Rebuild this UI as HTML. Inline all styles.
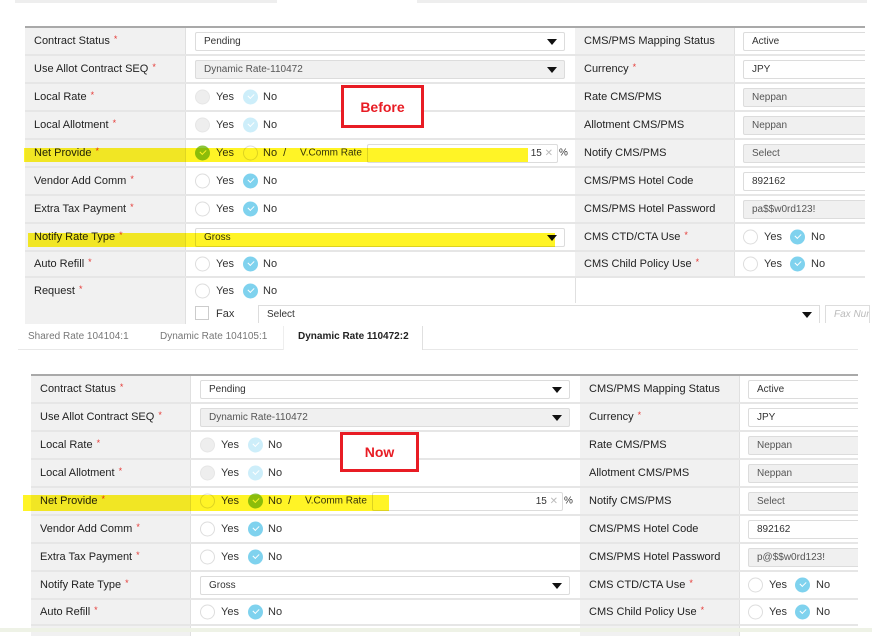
<!DOCTYPE html>
<html><head><meta charset="utf-8"><style>
*{box-sizing:border-box;margin:0;padding:0}
body{width:872px;height:632px;background:#fff;font-family:"Liberation Sans",Arial,sans-serif;position:relative;overflow:hidden;color:#222}
.sec{position:absolute;border-top:2px solid #a9a9a9}
.r{display:flex;border-bottom:2px solid #e6e6e6}
.l{background:#f1f1f1;font-size:11px;display:flex;align-items:center;padding-left:9px;border-right:1px solid #e0e0e0;white-space:nowrap}
.l i{color:#e53935;font-style:normal;font-size:9px;margin-left:4px;position:relative;top:-2px}
.v{position:relative;background:#fff;font-size:10px;overflow:hidden}
.A .c1{width:161px}.A .c2{width:389px}.A .c3{width:160px}.A .c4{width:130px}
.B .c1{width:160px}.B .c2{width:389px}.B .c3{width:160px}.B .c4{width:118px}
.box{position:absolute;left:9px;right:10px;top:4px;height:19px;border:1px solid #dcdcdc;border-radius:2px;padding-left:8px;line-height:17px;color:#333;background:#fff}
.box.g{background:#f0f0f0;color:#555}
.c4 .box{left:8px;right:-4px}
.arr{position:absolute;right:7px;top:6px;width:0;height:0;border-left:5px solid transparent;border-right:5px solid transparent;border-top:6px solid #111}
.rad{position:absolute;top:50%;transform:translateY(-50%);width:15px;height:15px;border-radius:50%;border:1px solid #ddd;background:#fff}
.rad.d{background:#eee;border-color:#e6e6e6}
.rad.c{background:#7fd2ee;border-color:#7fd2ee}
.rad.cd{background:#cdeefa;border-color:#cdeefa}
.rad.gr{background:#8cc63e;border-color:#8cc63e}
.rad.c::after,.rad.cd::after,.rad.gr::after{content:"";position:absolute;left:4px;top:3px;width:5px;height:3px;border-left:1.5px solid #fff;border-bottom:1.5px solid #fff;transform:rotate(-45deg)}
.t{position:absolute;top:50%;transform:translateY(-50%);font-size:11px;color:#333;white-space:nowrap}
.hl{position:absolute;background:#fff200;opacity:.85;mix-blend-mode:multiply}
.red{position:absolute;border:3px solid #e81c24;color:#e81c24;font-weight:bold;font-size:14px;display:flex;align-items:center;justify-content:center;background:#fff}
.tab{position:absolute;font-size:10px;color:#777;top:331px}
</style></head><body>

<div style="position:absolute;left:15px;top:0;width:262px;height:3px;background:#eee"></div>
<div style="position:absolute;left:417px;top:0;width:450px;height:3px;background:#eee"></div>

<!-- Section A -->
<div class="sec A" style="left:25px;top:26px;width:840px">
 <div class="r" style="height:28px"><div class="l c1">Contract Status<i>*</i></div><div class="v c2"><div class="box">Pending<span class="arr"></span></div></div><div class="l c3">CMS/PMS Mapping Status</div><div class="v c4"><div class="box">Active</div></div></div>
 <div class="r" style="height:28px"><div class="l c1">Use Allot Contract SEQ<i>*</i></div><div class="v c2"><div class="box g">Dynamic Rate-110472<span class="arr"></span></div></div><div class="l c3">Currency<i>*</i></div><div class="v c4"><div class="box">JPY</div></div></div>
 <div class="r" style="height:28px"><div class="l c1">Local Rate<i>*</i></div><div class="v c2"><span class="rad d" style="left:9px"></span><span class="t" style="left:30px">Yes</span><span class="rad cd" style="left:57px"></span><span class="t" style="left:77px">No</span></div><div class="l c3">Rate CMS/PMS</div><div class="v c4"><div class="box g">Neppan</div></div></div>
 <div class="r" style="height:28px"><div class="l c1">Local Allotment<i>*</i></div><div class="v c2"><span class="rad d" style="left:9px"></span><span class="t" style="left:30px">Yes</span><span class="rad cd" style="left:57px"></span><span class="t" style="left:77px">No</span></div><div class="l c3">Allotment CMS/PMS</div><div class="v c4"><div class="box g">Neppan</div></div></div>
 <div class="r" style="height:28px"><div class="l c1">Net Provide<i>*</i></div><div class="v c2"><span class="rad gr" style="left:9px"></span><span class="t" style="left:30px">Yes</span><span class="rad" style="left:57px"></span><span class="t" style="left:77px">No &nbsp;/</span><span class="t" style="left:114px;font-size:10px">V.Comm Rate</span><div class="box" style="left:181px;right:17px;text-align:right;padding-right:4px">15 <span style="color:#bbb">✕</span></div><span class="t" style="left:373px;font-size:10px">%</span></div><div class="l c3">Notify CMS/PMS</div><div class="v c4"><div class="box g">Select</div></div></div>
 <div class="r" style="height:28px"><div class="l c1">Vendor Add Comm<i>*</i></div><div class="v c2"><span class="rad" style="left:9px"></span><span class="t" style="left:30px">Yes</span><span class="rad c" style="left:57px"></span><span class="t" style="left:77px">No</span></div><div class="l c3">CMS/PMS Hotel Code</div><div class="v c4"><div class="box">892162</div></div></div>
 <div class="r" style="height:28px"><div class="l c1">Extra Tax Payment<i>*</i></div><div class="v c2"><span class="rad" style="left:9px"></span><span class="t" style="left:30px">Yes</span><span class="rad c" style="left:57px"></span><span class="t" style="left:77px">No</span></div><div class="l c3">CMS/PMS Hotel Password</div><div class="v c4"><div class="box g">pa$$w0rd123!</div></div></div>
 <div class="r" style="height:28px"><div class="l c1">Notify Rate Type<i>*</i></div><div class="v c2"><div class="box">Gross<span class="arr"></span></div></div><div class="l c3">CMS CTD/CTA Use<i>*</i></div><div class="v c4"><span class="rad" style="left:8px"></span><span class="t" style="left:29px">Yes</span><span class="rad c" style="left:55px"></span><span class="t" style="left:76px">No</span></div></div>
 <div class="r" style="height:26px"><div class="l c1">Auto Refill<i>*</i></div><div class="v c2"><span class="rad" style="left:9px"></span><span class="t" style="left:30px">Yes</span><span class="rad c" style="left:57px"></span><span class="t" style="left:77px">No</span></div><div class="l c3">CMS Child Policy Use<i>*</i></div><div class="v c4"><span class="rad" style="left:8px"></span><span class="t" style="left:29px">Yes</span><span class="rad c" style="left:55px"></span><span class="t" style="left:76px">No</span></div></div>
 <div class="r" style="height:25px;border-bottom:0"><div class="l c1">Request<i>*</i></div><div class="v c2"><span class="rad" style="left:9px"></span><span class="t" style="left:30px">Yes</span><span class="rad c" style="left:57px"></span><span class="t" style="left:77px">No</span></div><div class="v c3" style="border-left:1px solid #e0e0e0"></div><div class="v c4"></div></div>
 <div style="display:flex;height:21px"><div class="l c1"></div><div style="flex:1;position:relative;font-size:10px"></div></div>
</div>
<div style="position:absolute;left:195px;top:306px;width:14px;height:14px;border:1px solid #ccc;background:#fff"></div>
<span style="position:absolute;left:216px;top:308px;font-size:11px;color:#333">Fax</span>
<div style="position:absolute;left:258px;top:305px;width:562px;height:18px;border:1px solid #ddd;border-bottom:0;font-size:10px;padding-left:8px;line-height:18px;color:#333">Select<span class="arr" style="top:6px"></span></div>
<div style="position:absolute;left:825px;top:305px;width:45px;height:18px;border:1px solid #ddd;border-bottom:0;font-size:10px;padding-left:8px;line-height:18px;color:#bbb;font-style:italic;white-space:nowrap;overflow:hidden">Fax Num</div>

<div class="hl" style="left:24px;top:148px;width:504px;height:14px"></div>
<div class="hl" style="left:28px;top:233px;width:527px;height:14px"></div>
<div class="red" style="left:341px;top:85px;width:83px;height:43px">Before</div>

<!-- Tabs -->
<div style="position:absolute;left:18px;top:349px;width:840px;height:1px;background:#e8e8e8"></div>
<div style="position:absolute;left:283px;top:326px;width:140px;height:24px;background:#fff;border-right:1px solid #e0e0e0;border-left:1px solid #eee"></div>
<span class="tab" style="left:28px">Shared Rate 104104:1</span>
<span class="tab" style="left:160px">Dynamic Rate 104105:1</span>
<span class="tab" style="left:298px;color:#222;font-weight:bold">Dynamic Rate 110472:2</span>

<!-- Section B -->
<div class="sec B" style="left:31px;top:374px;width:827px">
 <div class="r" style="height:28px"><div class="l c1">Contract Status<i>*</i></div><div class="v c2"><div class="box">Pending<span class="arr"></span></div></div><div class="l c3">CMS/PMS Mapping Status</div><div class="v c4"><div class="box">Active</div></div></div>
 <div class="r" style="height:28px"><div class="l c1">Use Allot Contract SEQ<i>*</i></div><div class="v c2"><div class="box g">Dynamic Rate-110472<span class="arr"></span></div></div><div class="l c3">Currency<i>*</i></div><div class="v c4"><div class="box">JPY</div></div></div>
 <div class="r" style="height:28px"><div class="l c1">Local Rate<i>*</i></div><div class="v c2"><span class="rad d" style="left:9px"></span><span class="t" style="left:30px">Yes</span><span class="rad cd" style="left:57px"></span><span class="t" style="left:77px">No</span></div><div class="l c3">Rate CMS/PMS</div><div class="v c4"><div class="box g">Neppan</div></div></div>
 <div class="r" style="height:28px"><div class="l c1">Local Allotment<i>*</i></div><div class="v c2"><span class="rad d" style="left:9px"></span><span class="t" style="left:30px">Yes</span><span class="rad cd" style="left:57px"></span><span class="t" style="left:77px">No</span></div><div class="l c3">Allotment CMS/PMS</div><div class="v c4"><div class="box g">Neppan</div></div></div>
 <div class="r" style="height:28px"><div class="l c1">Net Provide<i>*</i></div><div class="v c2"><span class="rad" style="left:9px"></span><span class="t" style="left:30px">Yes</span><span class="rad gr" style="left:57px"></span><span class="t" style="left:77px">No &nbsp;/</span><span class="t" style="left:114px;font-size:10px">V.Comm Rate</span><div class="box" style="left:181px;right:17px;text-align:right;padding-right:4px">15 <span style="color:#bbb">✕</span></div><span class="t" style="left:373px;font-size:10px">%</span></div><div class="l c3">Notify CMS/PMS</div><div class="v c4"><div class="box g">Select</div></div></div>
 <div class="r" style="height:28px"><div class="l c1">Vendor Add Comm<i>*</i></div><div class="v c2"><span class="rad" style="left:9px"></span><span class="t" style="left:30px">Yes</span><span class="rad c" style="left:57px"></span><span class="t" style="left:77px">No</span></div><div class="l c3">CMS/PMS Hotel Code</div><div class="v c4"><div class="box">892162</div></div></div>
 <div class="r" style="height:28px"><div class="l c1">Extra Tax Payment<i>*</i></div><div class="v c2"><span class="rad" style="left:9px"></span><span class="t" style="left:30px">Yes</span><span class="rad c" style="left:57px"></span><span class="t" style="left:77px">No</span></div><div class="l c3">CMS/PMS Hotel Password</div><div class="v c4"><div class="box g">p@$$w0rd123!</div></div></div>
 <div class="r" style="height:28px"><div class="l c1">Notify Rate Type<i>*</i></div><div class="v c2"><div class="box">Gross<span class="arr"></span></div></div><div class="l c3">CMS CTD/CTA Use<i>*</i></div><div class="v c4"><span class="rad" style="left:8px"></span><span class="t" style="left:29px">Yes</span><span class="rad c" style="left:55px"></span><span class="t" style="left:76px">No</span></div></div>
 <div class="r" style="height:26px"><div class="l c1">Auto Refill<i>*</i></div><div class="v c2"><span class="rad" style="left:9px"></span><span class="t" style="left:30px">Yes</span><span class="rad c" style="left:57px"></span><span class="t" style="left:77px">No</span></div><div class="l c3">CMS Child Policy Use<i>*</i></div><div class="v c4"><span class="rad" style="left:8px"></span><span class="t" style="left:29px">Yes</span><span class="rad c" style="left:55px"></span><span class="t" style="left:76px">No</span></div></div>
 <div style="display:flex;height:10px"><div class="l c1"></div><div class="v c2"></div><div class="l c3"></div><div class="v c4"></div></div>
</div>
<div class="hl" style="left:23px;top:495px;width:366px;height:16px"></div>
<div class="red" style="left:340px;top:432px;width:79px;height:40px">Now</div>
<div style="position:absolute;left:0;top:628px;width:872px;height:4px;background:#eef2e6"></div>
</body></html>
